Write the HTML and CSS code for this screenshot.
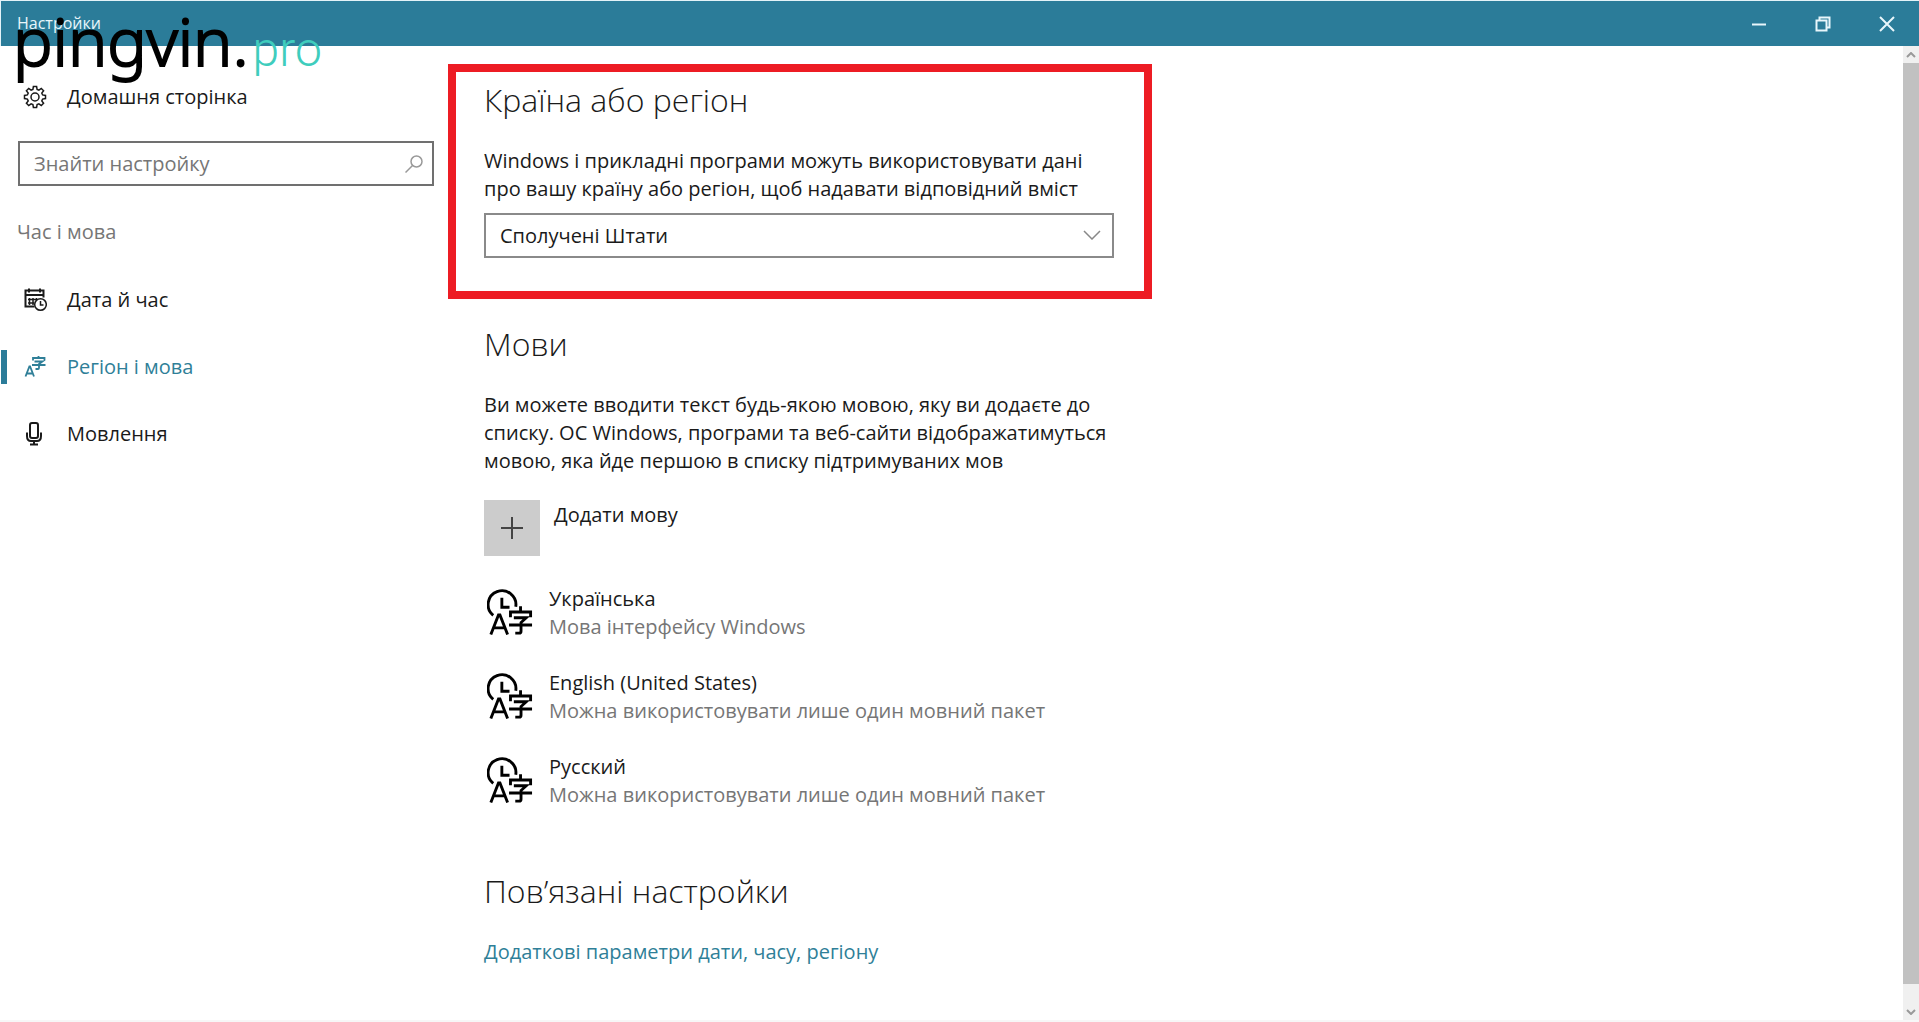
FILE: index.html
```html
<!DOCTYPE html>
<html lang="uk">
<head>
<meta charset="utf-8">
<meta name="viewport" content="width=device-width, initial-scale=1">
<title>Настройки</title>
<link rel="stylesheet" href="styles.css">
</head>
<body>
<svg class="symbols" aria-hidden="true">
  <symbol id="lang-clock" viewBox="0 0 48 48">
    <g fill="none" stroke="currentColor" stroke-width="3">
      <path d="M6.500 27.500A14.500 14.500 0 1 1 30 18.500"/>
      <path d="M15.500 9v10h8"/>
      <path d="M4 47.500L12 27h1.500L21.500 47.500M7 40.500h11.500"/>
      <path d="M35 18v5M24.500 29.500v-5.500h21V29.500M28 30h13L35.500 35v9q0 2-2 2h-4M23 37.500h24"/>
    </g>
  </symbol>
</svg>

<header class="titlebar">
  <span class="titlebar-name">Настройки</span>
  <div class="window-buttons">
    <button type="button" aria-label="Згорнути"><svg viewBox="0 0 16 16"><path d="M1 8.500h14"/></svg></button>
    <button type="button" aria-label="Відновити"><svg viewBox="0 0 16 16"><path d="M1.500 4.500h10v10h-10zM4.500 4.500v-3h10v10h-3"/></svg></button>
    <button type="button" aria-label="Закрити"><svg viewBox="0 0 16 16"><path d="M1 1l14 14M15 1L1 15"/></svg></button>
  </div>
</header>

<div class="watermark" aria-hidden="true"><span class="watermark-name">pingvin.</span><span class="watermark-zone">pro</span></div>

<div class="window-body">
  <nav class="sidebar">
    <a class="nav-item" href="#home">
      <svg class="nav-icon" viewBox="0 0 24 24"><path d="M10.4 1.500h3.200l.5 2.900 1.800.8 2.400-1.800 2.300 2.300-1.800 2.400.8 1.800 2.900.5v3.200l-2.900.5-.8 1.800 1.800 2.400-2.300 2.300-2.400-1.800-1.800.8-.5 2.900h-3.200l-.5-2.900-1.800-.8-2.400 1.800-2.300-2.300 1.800-2.400-.8-1.800-2.900-.5v-3.200l2.900-.5.8-1.800-1.800-2.400 2.300-2.300 2.400 1.800 1.800-.8z"/><circle cx="12" cy="12" r="4"/></svg>
      <span>Домашня сторінка</span>
    </a>
    <form class="search" role="search">
      <input type="search" aria-label="Знайти настройку" placeholder="Знайти настройку">
      <svg viewBox="0 0 18 18"><circle cx="11.500" cy="6.500" r="5.500"/><path d="M7.500 10.500L.5 17.500"/></svg>
    </form>
    <h2 class="sidebar-title">Час і мова</h2>
    <ul class="nav-list">
      <li><a class="nav-item" href="#date">
        <svg class="nav-icon" viewBox="0 0 24 24"><path d="M11.500 18.500h-9v-16h18v7M2.500 7h18" stroke-width="2"/><path d="M6 .5v4M17 .5v4" stroke-width="2"/><path d="M5 11.500h9M5 15h6M6.500 10v7M10 10v7M13.500 10v2"/><circle cx="17.500" cy="16.500" r="5.800"/><path d="M17.500 13v4h3"/></svg>
        <span>Дата й час</span></a></li>
      <li><a class="nav-item nav-item-current" href="#region" aria-current="page">
        <svg class="nav-icon" viewBox="0 0 24 24"><g stroke-width="1.800"><path d="M2.500 21.500L6.400 11.500h.7L11 21.500M4 18.500h5.500"/><path d="M15.500 1v2.500M10 5.500V3h11.500V5.500M11.500 6.500h8L16 9v4q0 1-1 1H12.500M9 10h13.500"/></g></svg>
        <span>Регіон і мова</span></a></li>
      <li><a class="nav-item" href="#speech">
        <svg class="nav-icon" viewBox="0 0 24 24"><rect x="7" y="1" width="8" height="15" rx="2" stroke-width="2"/><path d="M4 10.500V14q0 5 4 5h6q4 0 4-5v-3.500M11 19v3M7 22.500h8" stroke-width="2"/></svg>
        <span>Мовлення</span></a></li>
    </ul>
  </nav>

  <main class="content">
    <section class="section section-marked">
      <h1>Країна або регіон</h1>
      <p><label for="country">Windows і прикладні програми можуть використовувати дані<br>про вашу країну або регіон, щоб надавати відповідний вміст</label></p>
      <div class="select">
        <select id="country"><option>Сполучені Штати</option></select>
        <svg viewBox="0 0 18 10"><path d="M1 1l8 8 8-8"/></svg>
      </div>
    </section>

    <section class="section">
      <h1>Мови</h1>
      <p>Ви можете вводити текст будь-якою мовою, яку ви додаєте до<br>списку. ОС Windows, програми та веб-сайти відображатимуться<br>мовою, яка йде першою в списку підтримуваних мов</p>
      <button class="add-language" type="button">
        <span class="add-tile"><svg viewBox="0 0 24 24"><path d="M12 1v22M1 12h22"/></svg></span>
        <span>Додати мову</span>
      </button>
      <ul class="languages">
        <li><svg><use href="#lang-clock"/></svg><div><span class="lang-name">Українська</span><span class="lang-note">Мова інтерфейсу Windows</span></div></li>
        <li><svg><use href="#lang-clock"/></svg><div><span class="lang-name">English (United States)</span><span class="lang-note">Можна використовувати лише один мовний пакет</span></div></li>
        <li><svg><use href="#lang-clock"/></svg><div><span class="lang-name">Русский</span><span class="lang-note">Можна використовувати лише один мовний пакет</span></div></li>
      </ul>
    </section>

    <section class="section section-related">
      <h1>Пов’язані настройки</h1>
      <p><a href="#more">Додаткові параметри дати, часу, регіону</a></p>
    </section>
  </main>

  <div class="scrollbar">
    <button type="button" tabindex="-1" aria-label="Вгору"><svg viewBox="0 0 10 6"><path d="M1 5l4-4 4 4"/></svg></button>
    <div class="scroll-track"><div class="scroll-thumb"></div></div>
    <button type="button" tabindex="-1" aria-label="Вниз"><svg viewBox="0 0 10 6"><path d="M1 1l4 4 4-4"/></svg></button>
  </div>
</div>
</body>
</html>
```

FILE: styles.css
```css
* { box-sizing: border-box; }

:root {
  --accent: #2b7c99;
  --link: #2f7f98;
  --muted: #767676;
}

body {
  margin: 0;
  min-height: 100vh;
  display: flex;
  flex-direction: column;
  position: relative;
  background: #fff;
  color: #1a1a1a;
  font: 20px/28px "Open Sans", "Noto Sans", sans-serif;
}

button, input, select { font: inherit; color: inherit; }
button { border: 0; padding: 0; background: none; }
h1, h2, p, ul { margin: 0; padding: 0; font-weight: 400; }
ul { list-style: none; }
a { color: inherit; text-decoration: none; }
svg { fill: none; stroke: currentColor; flex: none; }
.symbols { position: absolute; width: 0; height: 0; }

/* Title bar */
.titlebar {
  display: flex;
  justify-content: space-between;
  height: 46px;
  padding-left: 16px;
  border: solid #e4f3f8;
  border-width: 1px 0 0 1px;
  background: var(--accent);
  background-clip: padding-box;
  color: #e8f6fb;
}
.titlebar-name { font-size: 16px; line-height: 44px; font-weight: 500; }
.window-buttons { display: flex; }
.window-buttons button {
  width: 64px;
  display: grid;
  place-items: center;
}
.window-buttons svg { width: 16px; height: 16px; stroke-width: 2; }

/* Site watermark laid over the window */
.watermark {
  position: absolute;
  left: 13px;
  top: 0;
  line-height: 80px;
  font-family: "Noto Sans", sans-serif;
  white-space: nowrap;
  pointer-events: none;
}
.watermark-name {
  font-size: 66px;
  font-weight: 300;
  color: #000;
  -webkit-text-stroke: 2px #000;
  stroke-linejoin: round;
}
.watermark-zone {
  margin-left: 4px;
  font-family: Roboto, sans-serif;
  font-size: 48px;
  font-weight: 300;
  color: #3fcdbd;
}

.window-body {
  flex: 1;
  display: grid;
  grid-template-columns: 448px 1fr 16px;
  border-bottom: 2px solid #f7f7f7;
}

/* Sidebar */
.sidebar { padding-top: 23px; }
.nav-item {
  display: flex;
  align-items: center;
  gap: 20px;
  height: 56px;
  padding-left: 23px;
}
.nav-icon { width: 24px; height: 24px; stroke-width: 1.500; }
.nav-list { display: grid; gap: 11px; margin-top: 26px; }
.nav-item-current { position: relative; color: var(--link); }
.nav-item-current::before {
  content: "";
  position: absolute;
  left: 1px;
  top: 11px;
  width: 6px;
  height: 34px;
  background: var(--accent);
}
.search {
  display: flex;
  align-items: center;
  height: 45px;
  margin: 16px 14px 0 18px;
  padding: 0 9px 0 14px;
  border: 2px solid #707070;
  color: #999;
}
.search input {
  flex: 1;
  min-width: 0;
  padding: 0;
  border: 0;
  outline: 0;
  background: none;
}
.search input::placeholder { color: var(--muted); opacity: 1; }
.search svg { width: 18px; height: 18px; stroke-width: 1.500; }
.sidebar-title { margin: 32px 17px 0; font-size: 20px; line-height: 28px; color: var(--muted); }

/* Settings page */
.content { padding-top: 18px; }
.section { max-width: 704px; padding: 0 36px; }
.section + .section { margin-top: 23px; }
.section-marked { padding: 6px 30px 33px 28px; border: 8px solid #ed1c24; }
.section + .section-related { margin-top: 60px; }
h1 { font-size: 32px; line-height: 44px; font-weight: 300; }
h1 + p { margin-top: 25px; }
.section p a { color: var(--link); }

.select { position: relative; margin-top: 10px; color: #888; }
.select select {
  display: block;
  width: 100%;
  height: 45px;
  padding: 0 14px;
  appearance: none;
  border: 2px solid #8a8a8a;
  border-radius: 0;
  background: #fff;
  color: #1a1a1a;
}
.select svg {
  position: absolute;
  right: 13px;
  top: 17px;
  width: 18px;
  height: 10px;
  stroke-width: 1.500;
}

.add-language {
  display: flex;
  gap: 14px;
  margin-top: 25px;
  line-height: 30px;
}
.add-tile {
  width: 56px;
  height: 56px;
  display: grid;
  place-items: center;
  background: #ccc;
}
.add-tile svg { width: 24px; height: 24px; stroke: #444; stroke-width: 2; }

.languages { display: grid; gap: 28px; margin-top: 29px; }
.languages li { display: flex; gap: 16px; }
.languages svg { width: 46px; height: 46px; margin: 4px 0 0 3px; color: #000; }
.languages span { display: block; }
.lang-note { color: var(--muted); }

/* Scroll bar */
.scrollbar { display: flex; flex-direction: column; background: #f0f0f0; color: #999; }
.scrollbar button { height: 17px; display: grid; place-items: center; }
.scrollbar svg { width: 10px; height: 6px; stroke-width: 2; }
.scroll-track { flex: 1; }
.scroll-thumb { height: 98%; background: #c1c1c1; }
```
